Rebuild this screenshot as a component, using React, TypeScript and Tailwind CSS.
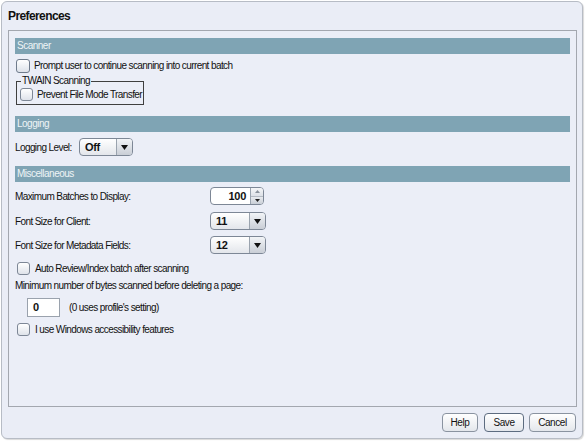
import React from "react";

const font = { fontFamily: '"Liberation Sans", Arial, sans-serif' };

function Check() {
  return (
    <div className="w-[13px] h-[13px] rounded-[3px] border border-[#7d8796] bg-gradient-to-b from-[#ffffff] to-[#dfe3ea] shrink-0" />
  );
}

function Header({ title }: { title: string }) {
  return (
    <div className="h-[16px] bg-[#7fa4b4] text-[#eef4f6] text-[10px] tracking-[-0.5px] leading-[16px] pl-[2px]">
      {title}
    </div>
  );
}

function Select({ value, w }: { value: string; w: string }) {
  return (
    <div
      className={`${w} h-[18px] rounded-[4px] border border-[#7d8796] bg-gradient-to-b from-[#ffffff] to-[#e3e6eb] flex items-stretch overflow-hidden shrink-0`}
    >
      <div className="flex-1 pl-[5px] text-[11px] tracking-[-0.3px] font-bold leading-[16px] text-[#111]">{value}</div>
      <div className="w-[16px] border-l border-[#9aa3ae] bg-gradient-to-b from-[#f2f4f7] to-[#c9ced6] flex items-center justify-center">
        <svg width="7" height="5" viewBox="0 0 7 5">
          <polygon points="0,0 7,0 3.5,5" fill="#111" />
        </svg>
      </div>
    </div>
  );
}

function Spinner() {
  return (
    <div className="w-[54px] h-[18px] rounded-[4px] border border-[#7d8796] bg-white flex items-stretch overflow-hidden shrink-0">
      <div className="flex-1 pr-[4px] text-right text-[11px] tracking-[-0.3px] font-bold leading-[16px] text-[#111]">100</div>
      <div className="w-[13px] border-l border-[#9aa3ae] flex flex-col">
        <div className="flex-1 bg-gradient-to-b from-[#f5f6f8] to-[#dde1e7] flex items-center justify-center border-b border-[#b4bac3]">
          <svg width="5" height="3" viewBox="0 0 5 3">
            <polygon points="0,3 5,3 2.5,0" fill="#8a929c" />
          </svg>
        </div>
        <div className="flex-1 bg-gradient-to-b from-[#e8ebef] to-[#c9ced6] flex items-center justify-center">
          <svg width="5" height="3" viewBox="0 0 5 3">
            <polygon points="0,0 5,0 2.5,3" fill="#222" />
          </svg>
        </div>
      </div>
    </div>
  );
}

function Button({ label, w, def }: { label: string; w: string; def?: boolean }) {
  return (
    <div
      className={`${w} h-[19px] rounded-[4px] border ${def ? "border-[#5d6c80]" : "border-[#8a93a0]"} bg-gradient-to-b from-[#ffffff] to-[#e4e7ec] text-[10px] tracking-[-0.4px] leading-[17px] text-center text-[#111]`}
    >
      {label}
    </div>
  );
}

export default function App() {
  return (
    <div className="w-[585px] h-[441px] bg-white p-[1px]" style={font}>
      <div className="w-[582px] h-[438px] rounded-[6px] border border-[#b7bcc5] bg-[#eaedf6] shadow-[1px_1px_1px_rgba(0,0,0,0.15)] flex flex-col">
        <div className="mt-[6px] h-[16px] pl-[6px] text-[12px] tracking-[-0.6px] leading-[16px] font-bold text-[#111]">
          Preferences
        </div>
        <div className="mt-[6px] ml-[6px] w-[569px] h-[377px] border border-[#a3a7af] bg-[#ebeef7] px-[6px] pt-[7px] flex flex-col text-[10px] tracking-[-0.6px] text-[#111] whitespace-nowrap">
          <Header title="Scanner" />
          <div className="mt-[4px] h-[15px] flex items-center">
            <div className="ml-[1px] w-[14px] h-[14px] rounded-[3px] border border-[#6f7b8c] bg-gradient-to-b from-[#ffffff] to-[#dde2ea]" />
            <span className="ml-[4px]">Prompt user to continue scanning into current batch</span>
          </div>
          <fieldset className="mt-[2px] ml-[1px] w-[128px] border border-[#3f3f3f] pb-[3px] pl-[3px]">
            <legend className="ml-[1px] px-[1px] leading-[12px]">TWAIN Scanning</legend>
            <div className="h-[14px] flex items-center">
              <Check />
              <span className="ml-[4px]">Prevent File Mode Transfer</span>
            </div>
          </fieldset>

          <div className="mt-[11px]">
            <Header title="Logging" />
          </div>
          <div className="mt-[6px] h-[18px] flex items-center">
            <span className="w-[64px]">Logging Level:</span>
            <Select value="Off" w="w-[54px]" />
          </div>

          <div className="mt-[10px]">
            <Header title="Miscellaneous" />
          </div>
          <div className="mt-[5px] h-[18px] flex items-center">
            <span className="w-[195px]">Maximum Batches to Display:</span>
            <Spinner />
          </div>
          <div className="mt-[7px] h-[18px] flex items-center">
            <span className="w-[195px]">Font Size for Client:</span>
            <Select value="11" w="w-[56px]" />
          </div>
          <div className="mt-[6px] h-[18px] flex items-center">
            <span className="w-[195px]">Font Size for Metadata Fields:</span>
            <Select value="12" w="w-[56px]" />
          </div>
          <div className="mt-[8px] h-[13px] flex items-center">
            <div className="ml-[2px]">
              <Check />
            </div>
            <span className="ml-[5px]">Auto Review/Index batch after scanning</span>
          </div>
          <div className="mt-[3px] h-[14px] flex items-center">
            <span>Minimum number of bytes scanned before deleting a page:</span>
          </div>
          <div className="mt-[6px] h-[19px] flex items-center">
            <div className="ml-[12px] w-[33px] h-[19px] border border-[#9aa2ad] bg-white pl-[5px] text-[11px] font-bold leading-[17px]">
              0
            </div>
            <span className="ml-[9px]">(0 uses profile's setting)</span>
          </div>
          <div className="mt-[6px] h-[13px] flex items-center">
            <div className="ml-[2px]">
              <Check />
            </div>
            <span className="ml-[5px]">I use Windows accessibility features</span>
          </div>
        </div>
        <div className="mt-[6px] flex justify-end pr-[6px]">
          <Button label="Help" w="w-[36px]" />
          <div className="ml-[6px]">
            <Button label="Save" w="w-[40px]" def />
          </div>
          <div className="ml-[5px]">
            <Button label="Cancel" w="w-[47px]" />
          </div>
        </div>
      </div>
    </div>
  );
}
